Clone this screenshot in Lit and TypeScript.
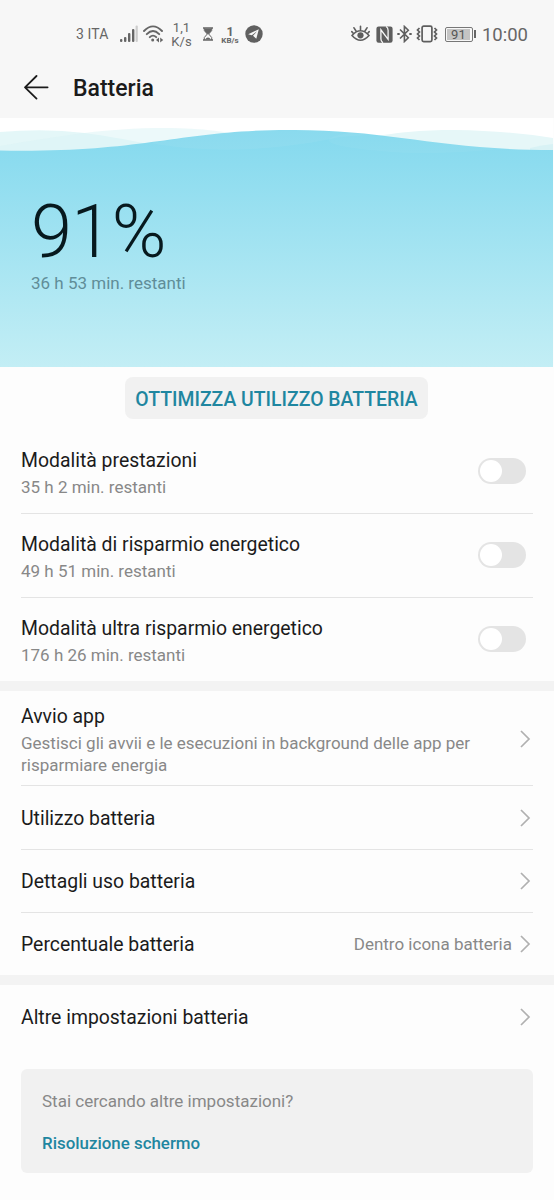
import { LitElement, html, svg, css, nothing } from "lit";
import { customElement, property } from "lit/decorators.js";

@customElement("status-bar")
class StatusBar extends LitElement {
  static styles = css`
    :host { display: flex; height: 68px; box-sizing: border-box; padding: 0 26px 0 76px; align-items: center; color: #666; }
    svg { display: block; flex: none; }
    .carrier { width: 44px; font-size: 14px; letter-spacing: 0.1px; white-space: nowrap; }
    .signal { margin-right: 5px; }
    .wifi { margin-right: 7px; }
    .rate { width: 21px; font-size: 13px; line-height: 14px; padding-top: 1px; text-align: center; letter-spacing: 0.1px; }
    .hourglass { margin: 0 8px 0 11px; }
    .speed { width: 18px; display: flex; flex-direction: column; align-items: center; font-weight: 700; padding-top: 3px; }
    .num { font-size: 12.5px; line-height: 10px; }
    .unit { font-size: 8px; line-height: 8px; }
    .plane { margin-left: 6px; }
    .right { margin-left: auto; display: flex; align-items: center; }
    .nfc { margin-left: 6px; }
    .bt { margin-left: 4px; }
    .vibe { margin-left: 4px; }
    .battery { margin-left: 7px; display: flex; align-items: center; }
    .cell { width: 28px; height: 15px; box-sizing: border-box; border: 1px solid #777; border-radius: 2px; padding: 1px; }
    .level { height: 100%; width: 23px; background: #c4c4c4; font-size: 13px; line-height: 12px; text-align: center; color: #555; }
    .tip { width: 2px; height: 8px; margin-left: 1px; background: #666; }
    .clock { margin: 1px 0 0 6px; font-size: 18.5px; white-space: nowrap; }
  `;
  render() {
    return html`
      <span class="carrier">3 ITA</span>
      <svg class="signal" width="18" height="18" viewBox="0 0 18 18" fill="#666">
        <rect x="0" y="14" width="2.4" height="3" rx="1"/><rect x="4" y="12" width="2.4" height="5" rx="1"/>
        <rect x="8" y="8" width="2.4" height="9" rx="1"/><rect x="12" y="4" width="2.4" height="13" rx="1"/>
        <rect x="15.6" y="0.5" width="2.2" height="16.5" rx="1" fill="#ccc"/>
      </svg>
      <svg class="wifi" width="21" height="18" viewBox="0 0 21 18" fill="none" stroke="#666" stroke-width="1.9" stroke-linecap="round">
        <path d="M1 6Q10 -3.2 19 6M3.8 9.2Q10 3 16.2 9.2M6.8 12.2Q10 9 13.2 12.2"/>
        <circle cx="9.7" cy="15" r="1.5" fill="#666" stroke="none"/>
        <path d="M16 12.6V17.4L13 15ZM17.2 12.6V17.4L20.2 15Z" fill="#666" stroke="none"/>
      </svg>
      <div class="rate">1,1<br>K/s</div>
      <svg class="hourglass" width="10" height="14" viewBox="0 0 10 14" fill="none" stroke="#666">
        <path d="M0 1H10M0 13H10" stroke-width="1.6"/><path d="M1.3 1V3.5L4.3 7L1.3 10.5V13M8.7 1V3.5L5.7 7L8.7 10.5V13"/>
        <path d="M1.5 1.5H8.5V4L5 7.5L1.5 4ZM2 12.5Q5 8.5 8 12.5Z" fill="#666" stroke="none"/>
      </svg>
      <div class="speed"><span class="num">1</span><span class="unit">KB/s</span></div>
      <svg class="plane" width="18" height="18" viewBox="0 0 18 18"><circle cx="9" cy="9" r="8.7" fill="#606060"/>
        <path d="M13.8 4.2L3.2 9.2L6.8 10.3L12 6.3L8 10.8L11.3 13.7Z" fill="#f7f7f7"/></svg>
      <div class="right">
        <svg width="19" height="18" viewBox="0 0 19 18" fill="none" stroke="#5e5e5e" stroke-width="1.6" stroke-linecap="round">
          <path d="M1 10.5Q9.5 1 18 10.5Q9.5 20 1 10.5ZM9.5 5.2V1.2M5 6L3 2.8M14 6L16 2.8M2.2 8.2L0.8 6.6M16.8 8.2L18.2 6.6"/>
          <circle cx="9.5" cy="10.3" r="3.1" fill="#5e5e5e" stroke="none"/>
        </svg>
        <svg class="nfc" width="17" height="17" viewBox="0 0 17 17">
          <rect x="0.4" y="0.5" width="16.2" height="16.2" rx="2.2" fill="#5e5e5e"/>
          <path d="M7 16.7Q4.9 15.5 4.9 13V3.8L12.1 13.4V4.2Q12.1 1.7 10 0.5" fill="none" stroke="#f7f7f7" stroke-width="1.3"/>
        </svg>
        <svg class="bt" width="15" height="18" viewBox="0 0 15 18" fill="none" stroke="#5e5e5e" stroke-width="1.6">
          <path d="M3 4.5L11.3 12.8L7.4 16.5V1.5L11.3 5.2L3 13.5"/>
          <path d="M0.3 9H2.7M12.3 9H14.7" stroke-width="2.2"/>
        </svg>
        <svg class="vibe" width="22" height="18" viewBox="0 0 22 18" fill="none" stroke="#5e5e5e" stroke-width="1.7">
          <rect x="6.1" y="1.2" width="9.8" height="15.4" rx="1.6"/>
          <path d="M3.5 3L1.5 5L3.5 7L1.5 9L3.5 11L1.5 13L3.5 15M18.5 3L20.5 5L18.5 7L20.5 9L18.5 11L20.5 13L18.5 15"/>
        </svg>
        <div class="battery"><div class="cell"><div class="level">91</div></div><div class="tip"></div></div>
        <span class="clock">10:00</span>
      </div>`;
  }
}

@customElement("battery-hero")
class BatteryHero extends LitElement {
  static styles = css`
    :host { display: grid; height: 249px; margin-right: 1px; background: #fff; }
    .water, .info { grid-area: 1 / 1; }
    .water { display: block; width: 553px; height: 249px; }
    .info { padding: 73px 0 0 31px; }
    .value { font-size: 74px; line-height: 82px; font-weight: 300; color: #07191e; letter-spacing: -0.7px; }
    .left { font-size: 17px; line-height: 20px; color: #608d98; }
  `;
  render() {
    return html`
      <svg class="water" viewBox="0 0 553 249" preserveAspectRatio="none">
        <defs><linearGradient id="g" x1="0" y1="0" x2="0" y2="1">
          <stop offset="0" stop-color="#84d9ee"/><stop offset="1" stop-color="#c3eef5"/>
        </linearGradient></defs>
        <path d="M0 14Q45 10 85 15C130 21 150 28 200 34H0Z" fill="#d9f3f5" fill-opacity=".7"/>
        <path d="M0 28C60 18 105 10 165 10C230 10 260 22 320 34H0Z" fill="#d9f3f5" fill-opacity=".5"/>
        <path d="M350 22C400 14 420 12 455 12Q510 13 553 20V36H350Z" fill="#e6f7f8"/>
        <path d="M530 30Q542 27 553 26V36H530Z" fill="#d8f2f5"/>
        <path d="M0 32.5C150 35 180 11 295 12C390 12 440 32 553 32V249H0Z" fill="url(#g)"/>
        <path d="M150 25C220 38 290 30 340 19L380 16C340 11 280 10 220 15Z" fill="#fff" fill-opacity=".05"/>
        <path d="M350 15C310 21 330 29 380 33C420 37 460 35 500 31Z" fill="#fff" fill-opacity=".04"/>
      </svg>
      <div class="info"><div class="value">91%</div><div class="left">36 h 53 min. restanti</div></div>`;
  }
}

@customElement("setting-row")
class SettingRow extends LitElement {
  @property() label = "";
  @property() note = "";
  @property() value = "";
  @property({ type: Boolean }) toggle = false;

  static styles = css`
    :host { display: flex; align-items: center; box-sizing: border-box; margin: 0 21px; border-bottom: 1px solid #e4e4e4; }
    :host([last]) { border-bottom-color: transparent; }
    .text { flex: 1; padding-top: 2px; }
    .label { font-size: 19.4px; line-height: 26px; color: #1b1b1b; white-space: nowrap; }
    .note { font-size: 17px; line-height: 22px; margin-top: 2px; color: #888; max-width: 465px; }
    .value { font-size: 17px; color: #888; padding-top: 1px; margin-right: 7px; white-space: nowrap; }
    .switch { width: 48px; height: 26px; border-radius: 13px; background: #e4e4e4; margin: 0 7.5px 2px 0; box-sizing: border-box; padding: 2px; }
    .knob { width: 22px; height: 22px; border-radius: 50%; background: #fff; }
    svg { display: block; margin-right: 2px; }
  `;
  render() {
    return html`
      <div class="text"><div class="label">${this.label}</div>
        ${this.note ? html`<div class="note">${this.note}</div>` : nothing}</div>
      ${this.value ? html`<span class="value">${this.value}</span>` : nothing}
      ${this.toggle
        ? html`<div class="switch"><div class="knob"></div></div>`
        : html`<svg width="12" height="18" viewBox="0 0 12 18" fill="none" stroke="#b0b0b0" stroke-width="1.7">${svg`<path d="M2 1L10 9L2 17"/>`}</svg>`}`;
  }
}

@customElement("app-root")
class AppRoot extends LitElement {
  static styles = css`
    :host { display: block; width: 554px; height: 1200px; overflow: hidden; background: #fdfdfd; font-family: Roboto, sans-serif; }
    .top { background: #f7f7f7; height: 118px; }
    .header { display: flex; align-items: center; height: 38px; padding-left: 24px; }
    .title { margin: 4px 0 0 24px; font-size: 23px; line-height: 30px; font-weight: 500; color: #1b1b1b; }
    .action { display: flex; justify-content: center; padding: 10px 1px 11px 0; height: 42px; }
    .button { width: 303px; height: 42px; padding: 2px 0 0; border: 0; border-radius: 8px; background: #f1f1f1; color: #1f86a0; font: 500 19.4px Roboto, sans-serif; white-space: nowrap; }
    .tall { height: 84px; }
    .final { height: 83px; padding-top: 2px; }
    .launch { height: 95px; padding-top: 1px; }
    .short { height: 62px; }
    .plain { height: 63px; }
    .usage { height: 64px; }
    .band { height: 10px; background: #f3f3f3; }
    .card { margin: 20px 21px 0; height: 104px; box-sizing: border-box; border-radius: 6px; background: #f1f1f1; padding: 21px; }
    .question { font-size: 17px; line-height: 22px; color: #888; }
    .link { font-size: 16.9px; line-height: 22px; margin-top: 20px; font-weight: 500; color: #1f86a0; }
  `;
  render() {
    return html`
      <div class="top">
        <status-bar></status-bar>
        <div class="header">
          <svg width="25" height="25" viewBox="0 0 25 25" fill="none" stroke="#1b1b1b" stroke-width="1.8" stroke-linecap="round" stroke-linejoin="round"><path d="M12.5 1L1 12.3L12.5 23.6M1 12.3H23.6"/></svg>
          <h1 class="title">Batteria</h1>
        </div>
      </div>
      <battery-hero></battery-hero>
      <div class="action"><button class="button">OTTIMIZZA UTILIZZO BATTERIA</button></div>
      <setting-row class="tall" toggle label="Modalità prestazioni" note="35 h 2 min. restanti"></setting-row>
      <setting-row class="tall" toggle label="Modalità di risparmio energetico" note="49 h 51 min. restanti"></setting-row>
      <setting-row class="final" toggle last label="Modalità ultra risparmio energetico" note="176 h 26 min. restanti"></setting-row>
      <div class="band"></div>
      <setting-row class="launch" label="Avvio app" note="Gestisci gli avvii e le esecuzioni in background delle app per risparmiare energia"></setting-row>
      <setting-row class="usage" label="Utilizzo batteria"></setting-row>
      <setting-row class="plain" label="Dettagli uso batteria"></setting-row>
      <setting-row class="short" last label="Percentuale batteria" value="Dentro icona batteria"></setting-row>
      <div class="band"></div>
      <setting-row class="usage" last label="Altre impostazioni batteria"></setting-row>
      <div class="card"><div class="question">Stai cercando altre impostazioni?</div><div class="link">Risoluzione schermo</div></div>`;
  }
}
